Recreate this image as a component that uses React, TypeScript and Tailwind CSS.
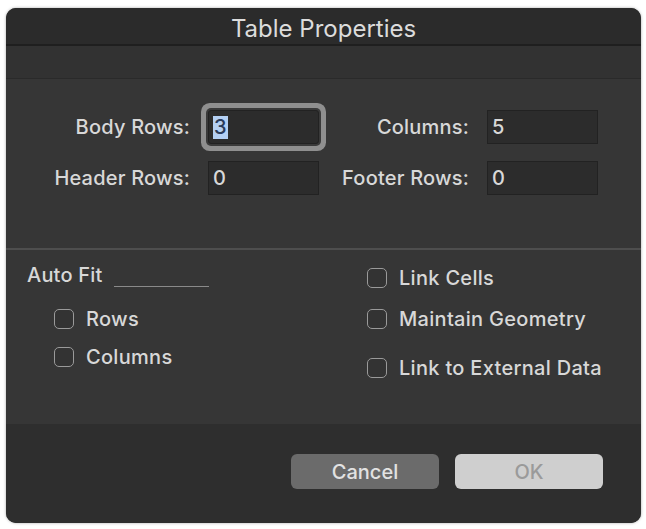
import React from "react";

const Checkbox = ({ label }: { label: string }) => (
    <label className="flex h-[24px] items-center gap-[12px]">
        <span className="h-[20px] w-[20px] shrink-0 rounded-[5px] border-[1.5px] border-[#9a9a9a] bg-[#333]" />
        <span className="text-[20px] font-medium tracking-[0.015em] text-[#d8d8d8]">{label}</span>
    </label>
);

const Field = ({
    label,
    value,
    labelWidth,
    focused = false,
}: {
    label: string;
    value: string;
    labelWidth: string;
    focused?: boolean;
}) => (
    <div className="flex items-center">
        <span
            className={`${labelWidth} text-right text-[20px] font-medium tracking-[0.01em] text-[#d8d8d8]`}
        >
            {label}
        </span>
        <div
            className={`ml-[18px] flex h-[34px] w-[111px] items-center border border-[#222] bg-[#2c2c2c] pl-[4px] ${
                focused ? "rounded-[3px] shadow-[0_0_0_2px_#3a3a3a,0_0_0_7px_#8f8f8f]" : ""
            }`}
        >
            {focused ? (
                <span className="bg-[#b4d0f3] px-[1px] text-[20px] leading-[23px] font-medium text-[#2b3c5a]">
                    {value}
                </span>
            ) : (
                <span className="text-[20px] font-medium text-[#d8d8d8]">{value}</span>
            )}
        </div>
    </div>
);

export default function App() {
    return (
        <div
            className="min-h-[529px] bg-white pt-[8px] pl-[6px]"
            style={{ fontFamily: 'Inter, "Liberation Sans", Arial, sans-serif' }}
        >
            <div className="flex h-[515px] w-[635px] flex-col overflow-hidden rounded-[10px] bg-[#363636] shadow-[0_0_3px_rgba(0,0,0,0.35)]">
                {/* title bar */}
                <div className="flex h-[38px] items-center justify-center border-b-2 border-[#1f1f1f] bg-[#2b2b2b] pt-[6px] text-[24px] text-[#dcdcdc]">
                    Table Properties
                </div>
                <div className="h-[33px] border-b border-[#2a2a2a] bg-[#323232]" />

                {/* size fields */}
                <div className="flex h-[169px] flex-col gap-[17px] pt-[31px]">
                    <div className="flex">
                        <Field label="Body Rows:" value="3" labelWidth="w-[184px]" focused />
                        <Field label="Columns:" value="5" labelWidth="w-[150px]" />
                    </div>
                    <div className="flex">
                        <Field label="Header Rows:" value="0" labelWidth="w-[184px]" />
                        <Field label="Footer Rows:" value="0" labelWidth="w-[150px]" />
                    </div>
                </div>
                <div className="h-[2px] bg-[#4e4e4e]" />

                {/* options */}
                <div className="flex h-[174px] pl-[21px]">
                    <div className="w-[340px] pt-[13px]">
                        <div className="flex h-[24px] items-center">
                            <span className="text-[20px] font-medium tracking-[0.01em] text-[#d8d8d8]">
                                Auto Fit
                            </span>
                            <span className="mt-[22px] ml-[12px] h-[1px] w-[95px] bg-[#8a8a8a]" />
                        </div>
                        <div className="mt-[20px] flex flex-col gap-[14px] pl-[27px]">
                            <Checkbox label="Rows" />
                            <Checkbox label="Columns" />
                        </div>
                    </div>
                    <div className="flex flex-col pt-[16px]">
                        <Checkbox label="Link Cells" />
                        <div className="mt-[17px]">
                            <Checkbox label="Maintain Geometry" />
                        </div>
                        <div className="mt-[25px]">
                            <Checkbox label="Link to External Data" />
                        </div>
                    </div>
                </div>

                {/* footer */}
                <div className="flex flex-1 justify-end gap-[16px] bg-[#2e2e2e] pt-[30px] pr-[38px]">
                    <button className="h-[35px] w-[148px] rounded-[6px] bg-[#6b6b6b] text-[20px] font-medium text-[#e2e2e2]">
                        Cancel
                    </button>
                    <button className="h-[35px] w-[148px] rounded-[6px] bg-[#cfcfcf] text-[20px] font-medium text-[#9a9a9a]">
                        OK
                    </button>
                </div>
            </div>
        </div>
    );
}
